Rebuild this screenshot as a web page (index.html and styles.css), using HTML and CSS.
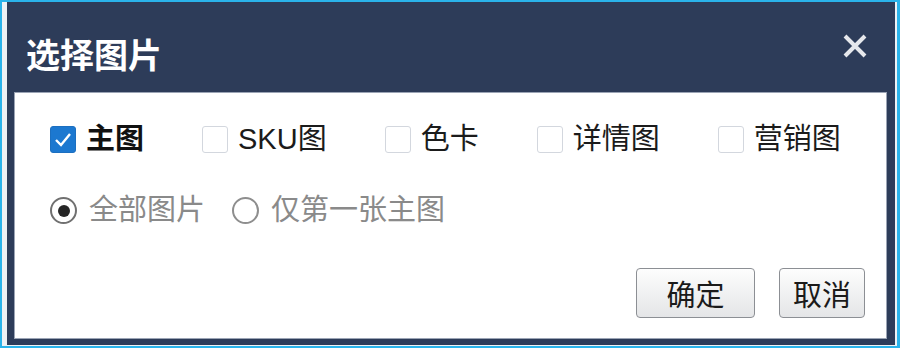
FILE: index.html
```html
<!DOCTYPE html>
<html lang="zh-CN">
<head>
<meta charset="utf-8">
<title>选择图片</title>
<link rel="stylesheet" href="styles.css">
</head>
<body>
<div class="frame">
  <div class="dialog">
    <div class="header">
      <div class="title">选择图片</div>
      <div class="close" aria-label="关闭">
        <svg width="26" height="26" viewBox="0 0 26 26"><path d="M3 3 L23 23 M23 3 L3 23" stroke="#e6e8ec" stroke-width="4" fill="none"/></svg>
      </div>
    </div>
    <div class="panel">
      <div class="checks">
        <label class="check-item">
          <span class="box checked"><svg width="26" height="27" viewBox="0 0 26 27"><path d="M6 14 L11 19 L20 8" stroke="#fff" stroke-width="2.4" fill="none"/></svg></span>
          <span class="label strong">主图</span>
        </label>
        <label class="check-item"><span class="box"></span><span class="label">SKU图</span></label>
        <label class="check-item"><span class="box"></span><span class="label">色卡</span></label>
        <label class="check-item"><span class="box"></span><span class="label">详情图</span></label>
        <label class="check-item"><span class="box"></span><span class="label">营销图</span></label>
      </div>
      <div class="radios">
        <label class="radio-item"><span class="ring selected"><span class="dot"></span></span><span class="rlabel">全部图片</span></label>
        <label class="radio-item"><span class="ring"></span><span class="rlabel">仅第一张主图</span></label>
      </div>
      <div class="actions">
        <button class="btn btn-ok">确定</button>
        <button class="btn btn-cancel">取消</button>
      </div>
    </div>
  </div>
</div>
</body>
</html>
```

FILE: styles.css
```css
html, body {
  margin: 0;
  height: 348px;
}
body {
  background: #2ab3ea;
  padding: 2px 3px 2px 2px;
  box-sizing: border-box;
  font-family: "Liberation Sans", "Noto Sans CJK SC", sans-serif;
  overflow: hidden;
}
.frame {
  height: 100%;
  background: #eef1f4;
  padding: 0 2px 1px 5px;
  box-sizing: border-box;
}
.dialog {
  height: 343px;
  background: #2d3c59;
  padding: 0 8px 6px 7px;
  box-sizing: border-box;
  display: flex;
  flex-direction: column;
}
.header {
  height: 90px;
  flex: none;
  display: flex;
  align-items: flex-start;
  justify-content: space-between;
  padding-left: 12px;
}
.title {
  margin-top: 35px;
  font-size: 34px;
  line-height: 34px;
  color: #ffffff;
  font-weight: bold;
  font-family: "Noto Sans CJK SC", sans-serif;
}
.close {
  margin-top: 31px;
  margin-right: 19px;
  width: 26px;
  height: 26px;
}
.close svg { display: block; }
.panel {
  flex: 1;
  background: #ffffff;
  border: 1px solid #9ba4b5;
  padding: 32px 21px 20px 35px;
  display: flex;
  flex-direction: column;
}
.checks {
  display: flex;
  align-items: center;
  gap: 58px;
  height: 28px;
}
.check-item {
  display: flex;
  align-items: center;
  gap: 10px;
}
.box {
  width: 26px;
  height: 27px;
  box-sizing: border-box;
  border: 1px solid #d3d7de;
  border-radius: 3px;
  background: #fff;
  flex: none;
}
.box.checked {
  background: #1c78d0;
  border-color: #1c6fc0;
}
.box svg { display: block; margin: -1px; }
.label {
  font-size: 29px;
  line-height: 29px;
  color: #1b1b1b;
}
.label.strong {
  font-weight: bold;
  color: #111;
}
.radios {
  margin-top: 44px;
  display: flex;
  align-items: center;
  gap: 27px;
  height: 27px;
}
.radio-item {
  display: flex;
  align-items: center;
  gap: 12px;
}
.ring {
  width: 27px;
  height: 27px;
  box-sizing: border-box;
  border: 2px solid #8e8e8e;
  border-radius: 50%;
  display: flex;
  align-items: center;
  justify-content: center;
  flex: none;
}
.ring.selected { border-color: #707070; }
.dot {
  width: 12px;
  height: 12px;
  border-radius: 50%;
  background: #262626;
}
.rlabel {
  font-size: 29px;
  line-height: 29px;
  color: #8a8a8a;
}
.actions {
  margin-top: auto;
  display: flex;
  justify-content: flex-end;
  gap: 24px;
}
.btn {
  height: 50px;
  font-family: "Liberation Sans", "Noto Sans CJK SC", sans-serif;
  font-size: 29px;
  color: #1a1a1a;
  background: linear-gradient(#fdfdfd, #e4e5e7);
  border: 1px solid #8c8f94;
  border-radius: 4px;
  padding: 0;
}
.btn-ok { width: 119px; }
.btn-cancel { width: 86px; }
```
